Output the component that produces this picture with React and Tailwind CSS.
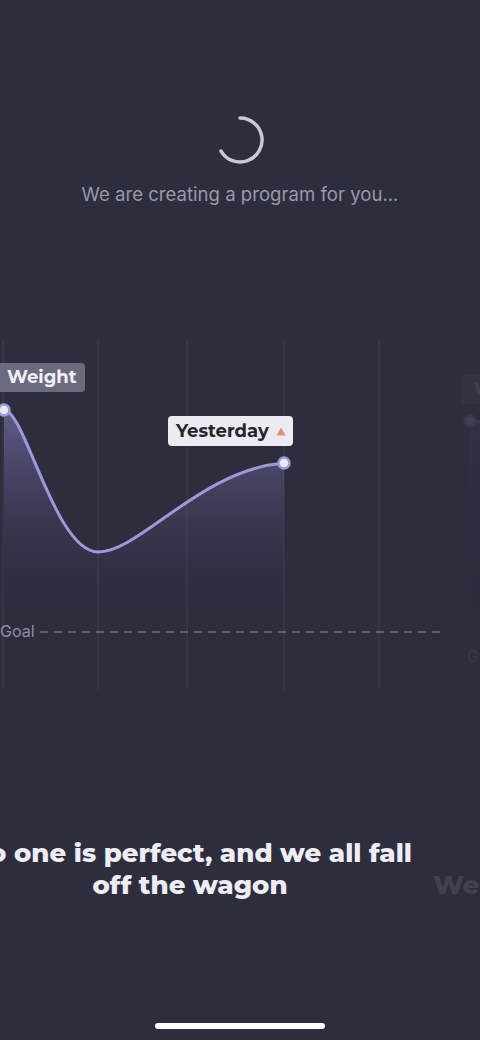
import React from "react";

const GRID = [3, 98, 187, 284, 379];

function Chart({ curve, area, dots, goalY, id }) {
  return (
    <svg width="467" height="360" viewBox="0 0 467 360" className="block overflow-visible">
      <defs>
        <linearGradient id={`fill-${id}`} gradientUnits="userSpaceOnUse" x1="0" y1="90" x2="0" y2="290">
          <stop offset="0" stopColor="#6f6ca0" stopOpacity="0.7" />
          <stop offset="0.45" stopColor="#55537e" stopOpacity="0.35" />
          <stop offset="1" stopColor="#2e2d3e" stopOpacity="0" />
        </linearGradient>
      </defs>
      {GRID.map((x) => (
        <line key={x} x1={x} y1="10" x2={x} y2="360" stroke="#3d3c51" strokeWidth="1" />
      ))}
      <path d={area} fill={`url(#fill-${id})`} />
      <path d={curve} fill="none" stroke="#9d99d9" strokeWidth="3" strokeLinecap="round" />
      <line x1="40" y1={goalY} x2="440" y2={goalY} stroke="#6e6c84" strokeWidth="1.5" strokeDasharray="8 6" />
      {dots.map(([x, y]) => (
        <circle key={x} cx={x} cy={y} r="5.5" fill="#e9e8f3" stroke="#9d99d9" strokeWidth="2.5" />
      ))}
    </svg>
  );
}

function Slide({ id, curve, area, dots, goalY, lines, weightTop, yesterdayTop, textTop }) {
  return (
    <div className="w-[467px] shrink-0 flex flex-col">
      <div className="relative h-[360px] mt-[124px]">
        <Chart id={id} curve={curve} area={area} dots={dots} goalY={goalY} />
        <div
          className="absolute left-[-6px] h-[29px] pl-[13px] pr-[8px] flex items-center rounded-[4px] bg-[#6c6b7d] text-[#f1f0f6] text-[18px] font-bold"
          style={{ top: weightTop }}
        >
          Weight
        </div>
        {yesterdayTop != null && (
          <div
            className="absolute left-[168px] h-[30px] pl-[8px] pr-[7px] flex items-center gap-[7px] rounded-[4px] bg-[#ecebf2] text-[#25242f] text-[18px] font-bold"
            style={{ top: yesterdayTop }}
          >
            Yesterday
            <svg width="10" height="9" viewBox="0 0 10 9">
              <path d="M5 0.5 L9.5 8.5 L0.5 8.5 Z" fill="#ea8a7e" />
            </svg>
          </div>
        )}
        <div
          className="absolute left-0 text-[16px] leading-none text-[#8e8ca1]"
          style={{ top: goalY - 9, fontFamily: "Inter, sans-serif" }}
        >
          Goal
        </div>
      </div>
      <div
        className="w-[380px] flex flex-col items-center text-[#eeedf5] text-[26px] leading-[32px] font-extrabold"
        style={{ marginTop: textTop }}
      >
        {lines.map((l) => (
          <span key={l} className="whitespace-nowrap">
            {l}
          </span>
        ))}
      </div>
    </div>
  );
}

export default function App() {
  return (
    <div
      className="w-[480px] h-[1040px] bg-[#2e2d3e] overflow-hidden flex flex-col"
      style={{ fontFamily: "Montserrat, 'DejaVu Sans', sans-serif" }}
    >
      {/* Loader */}
      <div className="flex flex-col items-center pt-[114px]">
        <svg width="52" height="52" viewBox="0 0 52 52">
          <path
            d="M26 4 A22 22 0 1 1 7 37"
            fill="none"
            stroke="#c9c7d8"
            strokeWidth="3.5"
            strokeLinecap="round"
          />
        </svg>
        <p
          className="mt-[16px] text-[18.6px] leading-[24px] text-[#9997ab]"
          style={{ fontFamily: "Inter, sans-serif" }}
        >
          We are creating a program for you...
        </p>
      </div>

      {/* Carousel */}
      <div className="flex">
        <Slide
          id="a"
          curve="M4 80 C25 80 55 222 98 222 C140 222 200 140 284 133"
          area="M4 80 C25 80 55 222 98 222 C140 222 200 140 284 133 L284 360 L4 360 Z"
          dots={[
            [4, 80],
            [284, 133],
          ]}
          goalY={302}
          weightTop={33}
          yesterdayTop={86}
          textTop={147}
          lines={["No one is perfect, and we all fall", "off the wagon"]}
        />
        <div className="opacity-[0.1]">
          <Slide
            id="b"
            curve="M3 91 C60 91 120 200 200 210 C260 218 320 160 380 150"
            area="M3 91 C60 91 120 200 200 210 C260 218 320 160 380 150 L380 360 L3 360 Z"
            dots={[[3, 91]]}
            goalY={327}
            weightTop={45}
            textTop={179}
            lines={["We'll help you get back on track"]}
          />
        </div>
      </div>

      {/* Home indicator */}
      <div className="mt-auto mb-[11px] flex justify-center">
        <div className="w-[170px] h-[6px] rounded-full bg-white" />
      </div>
    </div>
  );
}
